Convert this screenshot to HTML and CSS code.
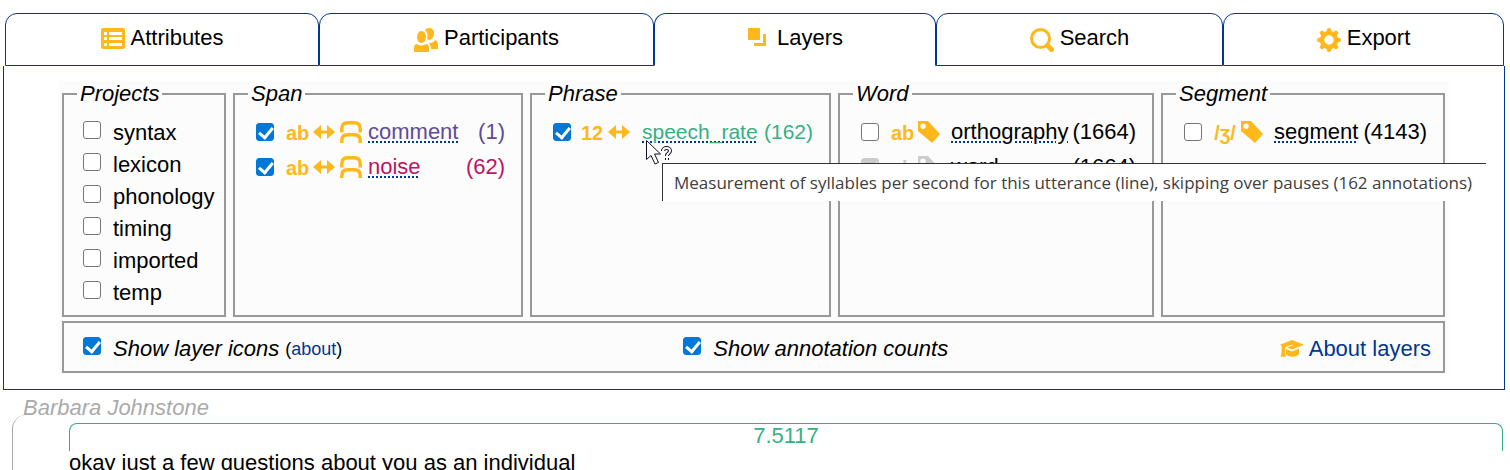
FILE: index.html
```html
<!DOCTYPE html>
<html lang="en">
<head>
<meta charset="utf-8">
<title>Layers</title>
<link rel="stylesheet" href="styles.css">
</head>
<body>
<svg class="sprite" aria-hidden="true">
  <symbol id="i-list" viewBox="0 0 24 24"><path fill="currentColor" fill-rule="evenodd" d="M2 0h20a2 2 0 0 1 2 2v17a2 2 0 0 1-2 2H2a2 2 0 0 1-2-2V2a2 2 0 0 1 2-2zM3 4v3h3V4zM8 4v3h13V4zM3 9v3h3V9zM8 9v3h13V9zM3 15v3h3v-3zM8 15v3h13v-3z"/></symbol>
  <symbol id="i-people" viewBox="0 0 24 24"><g fill="currentColor"><ellipse cx="7.500" cy="9" rx="4.500" ry="6"/><path d="M11 2c2-3 9-3 9 3 0 4-2 7-5 7l-2-1c1-3 1-6-2-9zM0 24v-4c0-2 1-4 3-4 3 2 6 2 9 0 2 0 3 2 3 4v4zM17 21c0-3-1-4-2-6 3 0 5-1 6-3 2 1 3 2 3 5v4z"/></g></symbol>
  <symbol id="i-layers" viewBox="0 0 24 24"><path fill="currentColor" d="M1 0h12v12H1zM16 6h3v12H7v-3h9z"/></symbol>
  <symbol id="i-search" viewBox="0 0 24 24"><g fill="none" stroke="currentColor"><circle cx="10.500" cy="10.500" r="9" stroke-width="3"/><path stroke-width="5" stroke-linecap="round" d="M18.500 18.500l3 3"/></g></symbol>
  <symbol id="i-gear" viewBox="0 0 24 24"><circle cx="12" cy="12" r="7" fill="none" stroke="currentColor" stroke-width="4.500"/><path fill="none" stroke="currentColor" stroke-width="4.500" stroke-linecap="round" d="M12 2.300v2M12 19.700v2M2.300 12h2M19.700 12h2M5 5l1.500 1.500M17.500 17.500L19 19M19 5l-1.500 1.500M6.500 17.500L5 19"/></symbol>
  <symbol id="i-arrow" viewBox="0 0 22 22"><path fill="currentColor" d="M0 11l8-7v5.500h6V4l8 7-8 7v-5.500H8V18z"/></symbol>
  <symbol id="i-span" viewBox="0 0 22 22"><path fill="none" stroke="currentColor" stroke-width="3.500" d="M1.800 11.500V8c0-4 2-6.200 6-6.200h6.400c4 0 6 2.200 6 6.200v3.500M1.800 22v-2.500c0-4 2-5.700 6-5.700h6.400c4 0 6 1.700 6 5.700V22"/></symbol>
  <symbol id="i-tag" viewBox="0 0 22 22"><path fill="currentColor" fill-rule="evenodd" d="M0 0h10l12 13-8 9L0 10zM5 2.500a2.700 2.700 0 1 0 0 5.400 2.700 2.700 0 0 0 0-5.400z"/></symbol>
  <symbol id="i-cap" viewBox="0 0 24 20"><path fill="currentColor" d="M12 1l12 4.800-12 4.800-5-2 6-2.300-1-.8-7 2.700v4.600l.7 5H.6l1-5V6.800L0 5.800zM6 10l6 2.400 7-2.800v5.600c-2 3.300-11 3.300-13 0z"/></symbol>
</svg>

<nav class="tabs" role="tablist">
  <button class="tab" role="tab"><svg class="tab-icon"><use href="#i-list"/></svg>Attributes</button>
  <button class="tab" role="tab"><svg class="tab-icon"><use href="#i-people"/></svg>Participants</button>
  <button class="tab active" role="tab" aria-selected="true"><svg class="tab-icon"><use href="#i-layers"/></svg>Layers</button>
  <button class="tab" role="tab"><svg class="tab-icon"><use href="#i-search"/></svg>Search</button>
  <button class="tab" role="tab"><svg class="tab-icon"><use href="#i-gear"/></svg>Export</button>
</nav>

<main class="panel">
  <div class="layers">
    <div class="groups">
      <fieldset class="group projects">
        <legend>Projects</legend>
        <label class="project"><input class="check" type="checkbox">syntax</label>
        <label class="project"><input class="check" type="checkbox">lexicon</label>
        <label class="project"><input class="check" type="checkbox">phonology</label>
        <label class="project"><input class="check" type="checkbox">timing</label>
        <label class="project"><input class="check" type="checkbox">imported</label>
        <label class="project"><input class="check" type="checkbox">temp</label>
      </fieldset>

      <fieldset class="group">
        <legend>Span</legend>
        <label class="layer span-layer comment"><input class="check" type="checkbox" checked>
          <span class="icons"><b class="type">ab</b><svg class="icon"><use href="#i-arrow"/></svg><svg class="icon"><use href="#i-span"/></svg></span>
          <span class="name">comment</span><span class="count">(1)</span></label>
        <label class="layer span-layer noise"><input class="check" type="checkbox" checked>
          <span class="icons"><b class="type">ab</b><svg class="icon"><use href="#i-arrow"/></svg><svg class="icon"><use href="#i-span"/></svg></span>
          <span class="name">noise</span><span class="count">(62)</span></label>
      </fieldset>

      <fieldset class="group">
        <legend>Phrase</legend>
        <label class="layer rate"><input class="check" type="checkbox" checked aria-describedby="tip">
          <span class="icons"><b class="type">12</b><svg class="icon"><use href="#i-arrow"/></svg></span>
          <span class="name">speech_rate</span><span class="count">(162)</span></label>
        <svg class="cursor" viewBox="0 0 27 27" aria-hidden="true"><path fill="#fff" stroke="#112" d="M.5.500v19l4.500-4 4 8.500 3.500-1.500-4-8.500h6z"/><path fill="none" stroke="#112" stroke-width="4" d="M17 11c0-4 7-4 7 0 0 2-3 2-3 5M21 18v2"/><path fill="none" stroke="#fff" stroke-width="2" d="M17 11c0-4 7-4 7 0 0 2-3 2-3 5M21 18v2"/></svg>
        <div class="tooltip" id="tip" role="tooltip">Measurement of syllables per second for this utterance (line), skipping over pauses (162 annotations)</div>
      </fieldset>

      <fieldset class="group">
        <legend>Word</legend>
        <label class="layer"><input class="check" type="checkbox">
          <span class="icons"><b class="type">ab</b><svg class="icon"><use href="#i-tag"/></svg></span>
          <span class="name">orthography</span><span class="count">(1664)</span></label>
        <label class="layer"><input class="check" type="checkbox" checked disabled>
          <span class="icons off"><b class="type">ab</b><svg class="icon"><use href="#i-tag"/></svg></span>
          <span class="name">word</span><span class="count">(1664)</span></label>
      </fieldset>

      <fieldset class="group">
        <legend>Segment</legend>
        <label class="layer"><input class="check" type="checkbox">
          <span class="icons"><b class="type">/ʒ/</b><svg class="icon"><use href="#i-tag"/></svg></span>
          <span class="name">segment</span><span class="count">(4143)</span></label>
      </fieldset>
    </div>

    <div class="options">
      <div class="option"><input class="check" type="checkbox" id="show-icons" checked><label for="show-icons">Show layer icons</label><small>(<a href="#about">about</a>)</small></div>
      <div class="option"><input class="check" type="checkbox" id="show-counts" checked><label for="show-counts">Show annotation counts</label></div>
      <a class="help" href="#layers"><svg class="cap"><use href="#i-cap"/></svg>About layers</a>
    </div>
  </div>
</main>

<section class="transcript">
  <h2 class="speaker">Barbara Johnstone</h2>
  <div class="turn">
    <div class="rate-span">7.5117</div>
    <p class="line">okay just a few questions about you as an individual</p>
  </div>
</section>
</body>
</html>
```

FILE: styles.css
```css
* { box-sizing: border-box; }

html { overflow: hidden; }

body {
  margin: 0;
  padding: 13px 5px 0 3px;
  background: #fff;
  color: #000;
  font: 22px/24px "Liberation Sans", Arial, sans-serif;
}

a { color: #003791; text-decoration: none; }

svg { flex: none; }

.sprite { display: none; }

/* Tabs */
.tabs {
  display: grid;
  grid-template-columns: 314fr 335fr 282fr 287fr 281fr;
  margin: 0 1px 0 2px;
}

.tab {
  display: flex;
  align-items: center;
  justify-content: center;
  gap: 6px;
  height: 53px;
  padding: 0 0 4px;
  border: 1px solid #003791;
  border-radius: 12px 12px 0 0;
  background: #fff;
  color: #000;
  font: inherit;
}

.tab.active { border-bottom-color: transparent; }

.tab-icon {
  width: 24px;
  height: 24px;
  margin-top: 4px;
  color: #ffb81c;
}

/* Panel */
.panel {
  padding: 15px 55px 15px;
  border: 1px solid #003791;
  border-top: 0;
}

.layers {
  padding: 1px 4px 1px 3px;
  background: #fcfcfc;
}

.groups {
  display: grid;
  grid-template-columns: 164fr 290fr 301fr 316fr 284fr;
  gap: 7px;
}

.group {
  position: relative;
  min-width: 0;
  margin: 0;
  padding: 8px 16px 7px 13px;
  border: 2px solid #999;
}

.group legend {
  padding: 0 3px;
  font-style: italic;
}

.group.projects { padding: 11px 0 6px 13px; }

.check {
  flex: none;
  appearance: none;
  width: 18px;
  height: 18px;
  margin: 0;
  border: 1px solid #767676;
  border-radius: 3px;
  background: #fff;
}

.check:checked {
  border-color: #0078d7;
  background: #0078d7;
}

.check:checked::before {
  content: "";
  display: block;
  width: 11px;
  height: 6px;
  margin: 3px 2px;
  border: solid #fff;
  border-width: 0 0 3px 3px;
  transform: rotate(-50deg);
}

.check:disabled {
  border-color: #ccc;
  background: #ccc;
}

.project {
  display: flex;
  align-items: center;
  gap: 12px;
  height: 32px;
  padding-left: 6px;
}

.project .check { margin-bottom: 6px; }

.layer {
  display: flex;
  align-items: center;
  height: 35px;
  padding-left: 8px;
}

.icons {
  display: flex;
  align-items: center;
  gap: 5px;
  margin: 0 11px 0 12px;
  color: #ffb81c;
}

.span-layer .icons { margin-right: 6px; }

.rate .icons { margin: 0 12px 0 10px; }

.icons.off { color: #ccc; }

.type {
  width: 22px;
  padding-top: 2px;
  font-size: 20px;
  text-align: center;
}

.icon { width: 22px; height: 22px; }

.name {
  text-decoration: underline dotted 2px #003791;
  text-underline-offset: 3px;
}

.count { margin-left: auto; }

.comment { color: #5f4b9b; }
.noise { color: #bf1363; }
.rate { color: #35b082; font-size: 21px; }

.cursor {
  position: absolute;
  left: 114px;
  top: 34px;
  width: 27px;
  height: 27px;
  z-index: 3;
}

.tooltip {
  position: absolute;
  left: 130px;
  top: 57px;
  z-index: 2;
  width: 824px;
  padding: 7px 11px 6px;
  border: solid #333;
  border-width: 1px 0 0 1px;
  background: #fff;
  color: #404040;
  font-family: "Open Sans", "Noto Sans", sans-serif;
  font-size: 17px;
  white-space: nowrap;
}

/* Options row */
.options {
  display: grid;
  grid-template-columns: 600fr 596fr auto;
  align-items: center;
  margin-top: 4px;
  padding: 14px 12px 10px 19px;
  border: 2px solid #999;
}

.option { display: flex; align-items: center; }

.option .check { margin: 0 12px 6px 0; }

.option label { font-style: italic; }

.option small { margin-left: 6px; font-size: 18px; }

.help { display: flex; align-items: center; gap: 5px; }

.cap { width: 24px; height: 20px; color: #ffb81c; }

/* Transcript */
.transcript { padding: 6px 0 0 9px; }

.speaker {
  width: max-content;
  margin: 0 0 0 11px;
  color: #aaa;
  font-size: 22px;
  font-style: italic;
  font-weight: 400;
}

.turn {
  margin-top: -5px;
  padding: 8px 0 0 56px;
  border-left: 1px solid #aaa;
  border-top-left-radius: 14px;
}

.rate-span {
  height: 28px;
  margin-right: 2px;
  border: 1px solid #35b082;
  border-bottom: 0;
  border-radius: 8px 8px 0 0;
  color: #35b082;
  text-align: center;
}

.line { margin: 0; }
```
